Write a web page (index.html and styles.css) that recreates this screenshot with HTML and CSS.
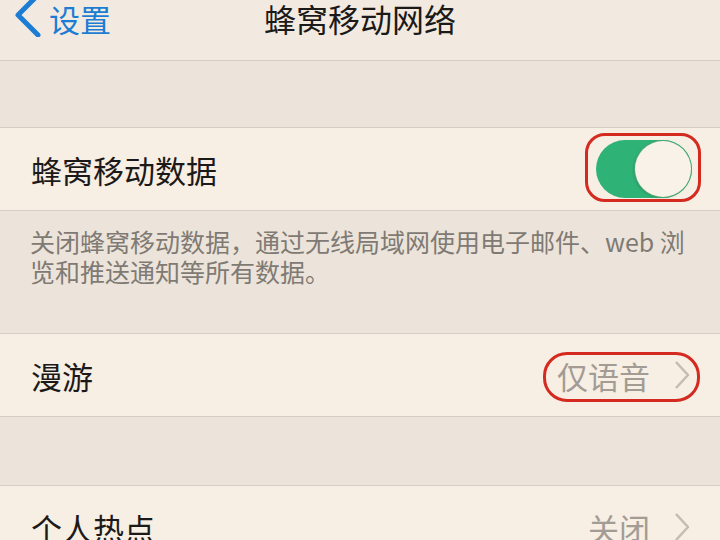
FILE: index.html
```html
<!DOCTYPE html>
<html lang="zh-CN">
<head>
  <meta charset="UTF-8">
  <title>蜂窝移动网络</title>
  <link rel="stylesheet" href="styles.css">
</head>
<body>
  <div class="navbar">
    <a class="back" href="#">
      <svg class="back-arrow" width="30" height="40" viewBox="0 0 30 40">
        <polyline points="26,-2 6,18 26,38" fill="none" stroke="#1b7dd3" stroke-width="5" stroke-linecap="round" stroke-linejoin="round"/>
      </svg>
      <span>设置</span>
    </a>
    <div class="title">蜂窝移动网络</div>
    <div></div>
  </div>

  <div class="spacer"></div>

  <!-- Cellular data -->
  <div class="group">
    <div class="row">
      <span class="label">蜂窝移动数据</span>
      <div class="switch on"><div class="knob"></div></div>
      <div class="mark mark-switch"></div>
    </div>
  </div>
  <div class="footer">
    关闭蜂窝移动数据，通过无线局域网使用电子邮件、web 浏<br>览和推送通知等所有数据。
  </div>

  <!-- Roaming -->
  <div class="group">
    <div class="row">
      <span class="label">漫游</span>
      <span class="value">仅语音</span>
      <svg class="chevron" width="16" height="30" viewBox="0 0 16 30">
        <polyline points="2,2 14,15 2,28" fill="none" stroke="#c2bcb4" stroke-width="2.5" stroke-linejoin="round"/>
      </svg>
      <div class="mark mark-roam"></div>
    </div>
  </div>

  <div class="spacer tall"></div>

  <!-- Hotspot -->
  <div class="group">
    <div class="row">
      <span class="label">个人热点</span>
      <span class="value">关闭</span>
      <svg class="chevron" width="16" height="30" viewBox="0 0 16 30">
        <polyline points="2,2 14,15 2,28" fill="none" stroke="#c2bcb4" stroke-width="2.5" stroke-linejoin="round"/>
      </svg>
    </div>
  </div>
</body>
</html>
```

FILE: styles.css
```css
body {
  margin: 0;
  width: 720px;
  height: 540px;
  overflow: hidden;
  background: #ece4da;
  font-family: "Noto Sans CJK SC", "Noto Sans", sans-serif;
  color: #1c1a18;
}
.navbar {
  display: grid;
  grid-template-columns: 1fr auto 1fr;
  align-items: center;
  height: 60px;
  background: #f2eae0;
  border-bottom: 1px solid #d6cec4;
}
.back {
  display: flex;
  align-items: center;
  gap: 7px;
  padding-left: 12px;
  color: #1b7dd3;
  text-decoration: none;
  font-size: 31px;
  height: 60px;
  margin-top: -24px;
}
.back-arrow {
  margin-top: -2px;
}
.title {
  font-size: 32px;
  margin-top: -24px;
}
.spacer {
  height: 66px;
}
.spacer.tall {
  height: 68px;
}
.group {
  border-top: 1px solid #d6cec4;
  border-bottom: 1px solid #d6cec4;
  background: #f7eee4;
}
.row {
  position: relative;
  display: flex;
  align-items: center;
  height: 82px;
  padding: 0 30px 0 31px;
}
.label {
  font-size: 31px;
}
.value {
  margin-left: auto;
  font-size: 31px;
  color: #a29c95;
  margin-right: 24px;
}
.chevron {
  display: block;
}
.switch {
  margin-left: auto;
  margin-right: -2px;
  width: 96px;
  height: 58px;
  border-radius: 29px;
  background: #2fb275;
  position: relative;
}
.knob {
  position: absolute;
  right: 1px;
  top: 1px;
  width: 56px;
  height: 56px;
  border-radius: 50%;
  background: #f8f2e8;
  box-shadow: 0 0 0 1px #4fa876, -1px 1px 3px rgba(0,0,0,0.2);
}
.footer {
  height: 122px;
  box-sizing: border-box;
  padding: 15px 20px 0 30px;
  font-size: 25px;
  line-height: 30px;
  color: #7f7a74;
  white-space: nowrap;
}
.mark {
  position: absolute;
  border: 3px solid #d42a20;
  box-sizing: border-box;
}
.mark-switch {
  left: 585px;
  top: 5px;
  width: 116px;
  height: 69px;
  border-radius: 20px;
}
.mark-roam {
  left: 543px;
  top: 18px;
  width: 157px;
  height: 50px;
  border-radius: 24px / 24px;
}
```
